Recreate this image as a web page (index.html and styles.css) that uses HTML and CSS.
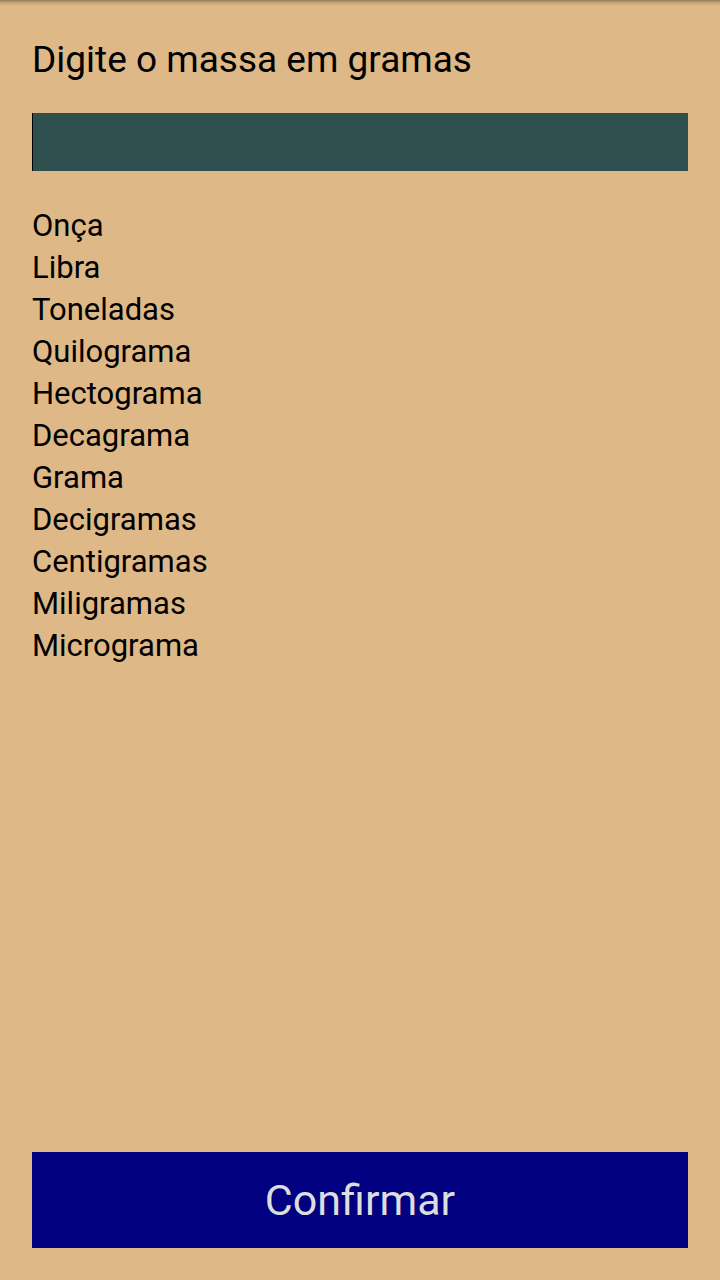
FILE: index.html
```html
<!DOCTYPE html>
<html lang="pt">
<head>
<meta charset="utf-8">
<link rel="stylesheet" href="styles.css">
</head>
<body>
<div class="shadow"></div>
<main class="screen">
  <h1 class="title">Digite o massa em gramas</h1>
  <div class="input"></div>
  <ul class="units">
    <li>Onça</li>
    <li>Libra</li>
    <li>Toneladas</li>
    <li>Quilograma</li>
    <li>Hectograma</li>
    <li>Decagrama</li>
    <li>Grama</li>
    <li>Decigramas</li>
    <li>Centigramas</li>
    <li>Miligramas</li>
    <li>Micrograma</li>
  </ul>
  <button class="confirm">Confirmar</button>
</main>
</body>
</html>
```
FILE: styles.css
```css
html, body {
  margin: 0;
  padding: 0;
  height: 100%;
}
body {
  background: #DEB887;
  font-family: Roboto, "Liberation Sans", sans-serif;
  color: #000;
  position: relative;
}
.shadow {
  position: absolute;
  top: 0;
  left: 0;
  right: 0;
  height: 6px;
  background: linear-gradient(to bottom, rgba(0,0,0,0.35), rgba(0,0,0,0.12) 40%, rgba(0,0,0,0));
}
.screen {
  box-sizing: border-box;
  height: 1280px;
  padding: 32px 32px 32px 32px;
  display: flex;
  flex-direction: column;
}
.title {
  margin: 0;
  font-size: 37px;
  font-weight: 400;
  line-height: 56px;
}
.input {
  margin-top: 25px;
  height: 58px;
  background: #2F4F4F;
  border-left: 1px solid #000;
}
.units {
  list-style: none;
  margin: 34px 0 0 0;
  padding: 0;
  font-size: 31px;
  line-height: 42px;
}
.confirm {
  margin-top: auto;
  height: 96px;
  border: none;
  background: #000080;
  color: #DDDDDD;
  font-family: Roboto, "Liberation Sans", sans-serif;
  font-size: 43px;
  padding: 0;
}
```
